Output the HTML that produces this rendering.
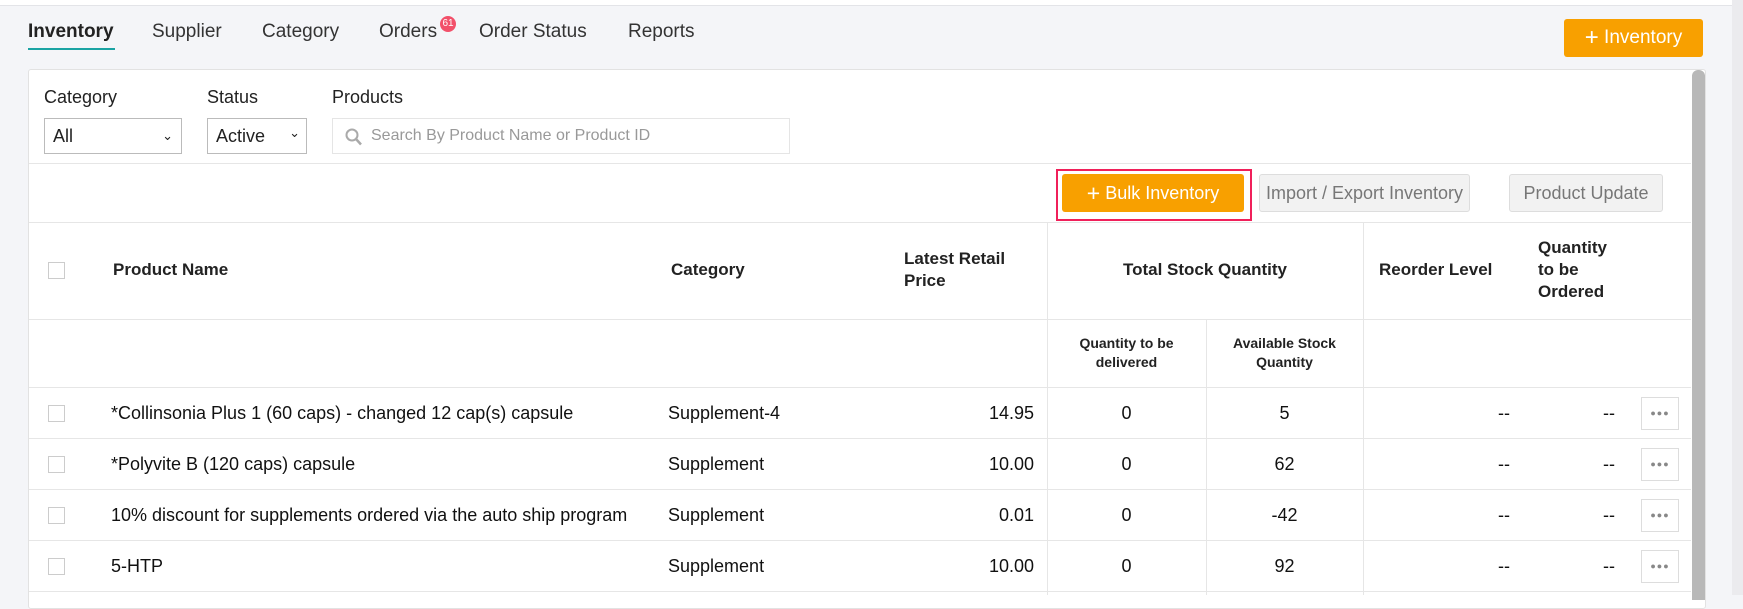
<!DOCTYPE html>
<html><head><meta charset="utf-8"><style>
*{box-sizing:border-box;margin:0;padding:0}
body{width:1743px;height:595px;overflow:hidden;background:#f4f5f8;font-family:"Liberation Sans",sans-serif;color:#222;position:relative}
.a{position:absolute;white-space:nowrap}
.tab{font-size:19px;color:#333;top:21px}
.hl{position:absolute;height:1px;background:#e6e6e6}
.vl{position:absolute;width:1px;background:#e6e6e6}
.cb{position:absolute;width:17px;height:17px;border:1px solid #ccc;background:#fff;left:48px}
.t{font-size:18px;color:#111}
.h{font-size:17px;font-weight:bold;color:#222}
.sh{font-size:14px;font-weight:bold;color:#222;text-align:center;line-height:19px}
.dots{position:absolute;left:1641px;width:38px;height:33px;border:1px solid #ddd;background:#fff;text-align:center;color:#888;font-size:9px;line-height:31px;letter-spacing:1px}
.btn{position:absolute;border-radius:3px;font-size:18px;text-align:center}
</style></head><body>
<div class="a" style="left:0;top:0;width:1743px;height:6px;background:#fff;border-bottom:1px solid #e3e4e8"></div>
<div class="a tab" style="left:28px;font-weight:bold;color:#222">Inventory</div>
<div class="a" style="left:28px;top:48px;width:87px;height:2px;background:#1aa3a3"></div>
<div class="a tab" style="left:152px">Supplier</div>
<div class="a tab" style="left:262px">Category</div>
<div class="a tab" style="left:379px">Orders</div>
<div class="a" style="left:440px;top:16px;width:16px;height:16px;border-radius:8px;background:#f2506a;color:#fff;font-size:10px;text-align:center;line-height:16px">61</div>
<div class="a tab" style="left:479px">Order Status</div>
<div class="a tab" style="left:628px">Reports</div>
<div class="btn" style="left:1564px;top:19px;width:139px;height:38px;background:#f8a000;color:#fff;line-height:38px;font-size:19px"><span style="font-size:24px;vertical-align:-2px">+</span> Inventory</div>

<div class="a" style="left:28px;top:69px;width:1678px;height:540px;background:#fff;border:1px solid #e2e2e2;border-radius:3px"></div>
<div class="a" style="left:1692px;top:70px;width:13px;height:530px;background:#b8b8b8;border-radius:6px 6px 0 0"></div>

<div class="a" style="left:44px;top:87px;font-size:18px">Category</div>
<div class="a" style="left:207px;top:87px;font-size:18px">Status</div>
<div class="a" style="left:332px;top:87px;font-size:18px">Products</div>
<div class="a" style="left:44px;top:118px;width:138px;height:36px;border:1px solid #bbb;font-size:18px;line-height:34px;padding-left:8px">All<span style="position:absolute;right:8px;font-size:13px">&#8964;</span></div>
<div class="a" style="left:207px;top:118px;width:100px;height:36px;border:1px solid #bbb;font-size:18px;line-height:34px;padding-left:8px">Active<span style="position:absolute;right:6px;top:-3px;font-size:13px">&#8964;</span></div>
<div class="a" style="left:332px;top:118px;width:458px;height:36px;border:1px solid #e5e5e5;font-size:16px;line-height:34px;padding-left:38px;color:#999">Search By Product Name or Product ID
<svg style="position:absolute;left:12px;top:9px" width="17" height="18" viewBox="0 0 17 18"><circle cx="7" cy="7" r="5.5" fill="none" stroke="#aaa" stroke-width="2"/><path d="M11 11l5 5.5" stroke="#aaa" stroke-width="2.5"/></svg></div>
<div class="hl" style="left:29px;top:163px;width:1662px"></div>

<div class="a" style="left:1056px;top:169px;width:196px;height:52px;border:2px solid #f0205a"></div>
<div class="btn" style="left:1062px;top:174px;width:182px;height:38px;background:#f8a000;color:#fff;line-height:38px"><span style="font-size:23px;vertical-align:-2px">+</span> Bulk Inventory</div>
<div class="btn" style="left:1259px;top:174px;width:211px;height:38px;background:#f2f2f2;border:1px solid #ddd;color:#777;line-height:36px">Import / Export Inventory</div>
<div class="btn" style="left:1509px;top:174px;width:154px;height:38px;background:#f2f2f2;border:1px solid #ddd;color:#777;line-height:36px">Product Update</div>
<div class="hl" style="left:29px;top:222px;width:1662px"></div>

<div class="vl" style="left:1047px;top:223px;height:372px"></div>
<div class="vl" style="left:1363px;top:223px;height:372px"></div>
<div class="vl" style="left:1206px;top:320px;height:275px"></div>
<div class="cb" style="top:262px"></div>
<div class="a h" style="left:113px;top:260px">Product Name</div>
<div class="a h" style="left:671px;top:260px">Category</div>
<div class="a h" style="left:904px;top:248px;line-height:22px">Latest Retail<br>Price</div>
<div class="a h" style="left:1047px;top:260px;width:316px;text-align:center">Total Stock Quantity</div>
<div class="a h" style="left:1379px;top:260px">Reorder Level</div>
<div class="a h" style="left:1538px;top:237px;line-height:22px">Quantity<br>to be<br>Ordered</div>
<div class="hl" style="left:29px;top:319px;width:1662px"></div>
<div class="a sh" style="left:1047px;top:334px;width:159px">Quantity to be<br>delivered</div>
<div class="a sh" style="left:1206px;top:334px;width:157px">Available Stock<br>Quantity</div>
<div class="hl" style="left:29px;top:387px;width:1662px"></div>

<div class="hl" style="left:29px;top:438px;width:1662px"></div>
<div class="hl" style="left:29px;top:489px;width:1662px"></div>
<div class="hl" style="left:29px;top:540px;width:1662px"></div>
<div class="hl" style="left:29px;top:591px;width:1662px"></div>

<div class="cb" style="top:405px"></div>
<div class="a t" style="left:111px;top:403px">*Collinsonia Plus 1 (60 caps) - changed 12 cap(s) capsule</div>
<div class="a t" style="left:668px;top:403px">Supplement-4</div>
<div class="a t" style="left:900px;top:403px;width:134px;text-align:right">14.95</div>
<div class="a t" style="left:1047px;top:403px;width:159px;text-align:center">0</div>
<div class="a t" style="left:1206px;top:403px;width:157px;text-align:center">5</div>
<div class="a t" style="left:1450px;top:403px;width:60px;text-align:right">--</div>
<div class="a t" style="left:1555px;top:403px;width:60px;text-align:right">--</div>
<div class="dots" style="top:397px">&#9679;&#9679;&#9679;</div>

<div class="cb" style="top:456px"></div>
<div class="a t" style="left:111px;top:454px">*Polyvite B (120 caps) capsule</div>
<div class="a t" style="left:668px;top:454px">Supplement</div>
<div class="a t" style="left:900px;top:454px;width:134px;text-align:right">10.00</div>
<div class="a t" style="left:1047px;top:454px;width:159px;text-align:center">0</div>
<div class="a t" style="left:1206px;top:454px;width:157px;text-align:center">62</div>
<div class="a t" style="left:1450px;top:454px;width:60px;text-align:right">--</div>
<div class="a t" style="left:1555px;top:454px;width:60px;text-align:right">--</div>
<div class="dots" style="top:448px">&#9679;&#9679;&#9679;</div>

<div class="cb" style="top:507px"></div>
<div class="a t" style="left:111px;top:505px">10% discount for supplements ordered via the auto ship program</div>
<div class="a t" style="left:668px;top:505px">Supplement</div>
<div class="a t" style="left:900px;top:505px;width:134px;text-align:right">0.01</div>
<div class="a t" style="left:1047px;top:505px;width:159px;text-align:center">0</div>
<div class="a t" style="left:1206px;top:505px;width:157px;text-align:center">-42</div>
<div class="a t" style="left:1450px;top:505px;width:60px;text-align:right">--</div>
<div class="a t" style="left:1555px;top:505px;width:60px;text-align:right">--</div>
<div class="dots" style="top:499px">&#9679;&#9679;&#9679;</div>

<div class="cb" style="top:558px"></div>
<div class="a t" style="left:111px;top:556px">5-HTP</div>
<div class="a t" style="left:668px;top:556px">Supplement</div>
<div class="a t" style="left:900px;top:556px;width:134px;text-align:right">10.00</div>
<div class="a t" style="left:1047px;top:556px;width:159px;text-align:center">0</div>
<div class="a t" style="left:1206px;top:556px;width:157px;text-align:center">92</div>
<div class="a t" style="left:1450px;top:556px;width:60px;text-align:right">--</div>
<div class="a t" style="left:1555px;top:556px;width:60px;text-align:right">--</div>
<div class="dots" style="top:550px">&#9679;&#9679;&#9679;</div>

<div class="a" style="left:1732px;top:0;width:11px;height:595px;background:#ebebee"></div>
</body></html>
